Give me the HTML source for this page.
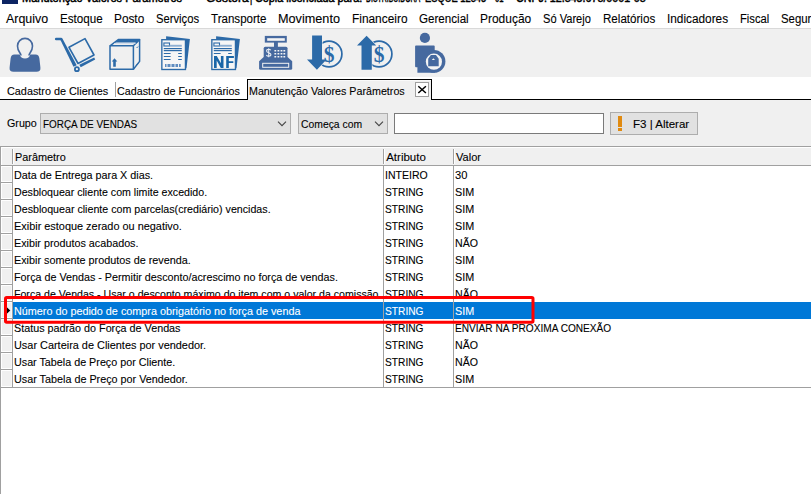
<!DOCTYPE html><html><head><meta charset="utf-8"><style>*{margin:0;padding:0;box-sizing:border-box}
html,body{width:811px;height:494px;overflow:hidden;background:#fff;font-family:"Liberation Sans",sans-serif;position:relative}
.a{position:absolute}
.t{position:absolute;white-space:nowrap;transform-origin:0 50%;font-family:"Liberation Sans",sans-serif;-webkit-text-stroke:0.1px currentColor}
#texts{position:absolute;left:0;top:0;width:811px;height:494px}
</style></head><body><!-- title icon -->
<div class="a" style="left:2px;top:0;width:16px;height:4px;background:#0d2463"></div>
<!-- menu line -->
<div class="a" style="left:0;top:28px;width:811px;height:1px;background:#d9d9d9"></div>
<!-- toolbar -->
<div class="a" style="left:0;top:29px;width:811px;height:48px;background:#f0f0f0"></div>
<!-- tab strip -->
<div class="a" style="left:0;top:99px;width:248px;height:1px;background:#000"></div>
<div class="a" style="left:431px;top:99px;width:380px;height:1px;background:#000"></div>
<div class="a" style="left:115px;top:82px;width:1px;height:15px;background:#a0a0a0"></div>
<div class="a" style="left:247px;top:79px;width:185px;height:21px;border:1px solid #000;border-bottom:none;background:#f0f0f0"></div>
<div class="a" style="left:248px;top:80px;width:183px;height:1px;background:#fafafa"></div>
<div class="a" style="left:415px;top:82px;width:14px;height:15px;border:1px solid #a0a0a0;background:#fff"></div>
<!-- filter area -->
<div class="a" style="left:0;top:100px;width:811px;height:46px;background:#f0f0f0"></div>
<div class="a" style="left:40px;top:113px;width:251px;height:21px;border:1px solid #adadad;background:#e1e1e1"></div>
<div class="a" style="left:298px;top:113px;width:90px;height:21px;border:1px solid #adadad;background:#e1e1e1"></div>
<div class="a" style="left:394px;top:113px;width:210px;height:21px;border:1px solid #7a7a7a;background:#fff"></div>
<div class="a" style="left:610px;top:112px;width:88px;height:23px;border:1px solid #adadad;background:#e1e1e1"></div>
<div class="a" style="left:618px;top:115.5px;width:4px;height:11px;background:#e08a10"></div>
<div class="a" style="left:618px;top:128px;width:4px;height:3px;background:#e08a10"></div>
<!-- grid -->
<div class="a" style="left:0;top:146px;width:811px;height:348px;border-top:1px solid #a0a0a0;border-left:1px solid #a0a0a0;background:#fff"></div>
<div class="a" style="left:1px;top:147px;width:810px;height:18px;background:#f0f0f0;border-top:1px solid #fff;border-left:1px solid #fff"></div>
<div class="a" style="left:0;top:165px;width:811px;height:1px;background:#a0a0a0"></div>
<div class="a" style="left:12px;top:149px;width:1px;height:15px;background:#a0a0a0"></div>
<div class="a" style="left:13px;top:149px;width:1px;height:15px;background:#fff"></div>
<div class="a" style="left:383px;top:149px;width:1px;height:15px;background:#a0a0a0"></div>
<div class="a" style="left:384px;top:149px;width:1px;height:15px;background:#fff"></div>
<div class="a" style="left:453px;top:149px;width:1px;height:15px;background:#a0a0a0"></div>
<div class="a" style="left:454px;top:149px;width:1px;height:15px;background:#fff"></div>
<!-- selected row -->
<div class="a" style="left:13px;top:302px;width:798px;height:17px;background:#0078d7"></div>
<!-- indicator cells -->
<div class="a" style="left:1px;top:166px;width:11px;height:16px;background:#f0f0f0;border:1px solid #fff;border-right-color:#f8f8f8"></div>
<div class="a" style="left:0;top:182px;width:13px;height:1px;background:#a0a0a0"></div>
<div class="a" style="left:1px;top:183px;width:11px;height:16px;background:#f0f0f0;border:1px solid #fff;border-right-color:#f8f8f8"></div>
<div class="a" style="left:0;top:199px;width:13px;height:1px;background:#a0a0a0"></div>
<div class="a" style="left:1px;top:200px;width:11px;height:16px;background:#f0f0f0;border:1px solid #fff;border-right-color:#f8f8f8"></div>
<div class="a" style="left:0;top:216px;width:13px;height:1px;background:#a0a0a0"></div>
<div class="a" style="left:1px;top:217px;width:11px;height:16px;background:#f0f0f0;border:1px solid #fff;border-right-color:#f8f8f8"></div>
<div class="a" style="left:0;top:233px;width:13px;height:1px;background:#a0a0a0"></div>
<div class="a" style="left:1px;top:234px;width:11px;height:16px;background:#f0f0f0;border:1px solid #fff;border-right-color:#f8f8f8"></div>
<div class="a" style="left:0;top:250px;width:13px;height:1px;background:#a0a0a0"></div>
<div class="a" style="left:1px;top:251px;width:11px;height:16px;background:#f0f0f0;border:1px solid #fff;border-right-color:#f8f8f8"></div>
<div class="a" style="left:0;top:267px;width:13px;height:1px;background:#a0a0a0"></div>
<div class="a" style="left:1px;top:268px;width:11px;height:16px;background:#f0f0f0;border:1px solid #fff;border-right-color:#f8f8f8"></div>
<div class="a" style="left:0;top:284px;width:13px;height:1px;background:#a0a0a0"></div>
<div class="a" style="left:1px;top:285px;width:11px;height:16px;background:#f0f0f0;border:1px solid #fff;border-right-color:#f8f8f8"></div>
<div class="a" style="left:0;top:301px;width:13px;height:1px;background:#a0a0a0"></div>
<div class="a" style="left:1px;top:302px;width:11px;height:16px;background:#f0f0f0;border:1px solid #fff;border-right-color:#f8f8f8"></div>
<div class="a" style="left:0;top:318px;width:13px;height:1px;background:#a0a0a0"></div>
<div class="a" style="left:1px;top:319px;width:11px;height:16px;background:#f0f0f0;border:1px solid #fff;border-right-color:#f8f8f8"></div>
<div class="a" style="left:0;top:335px;width:13px;height:1px;background:#a0a0a0"></div>
<div class="a" style="left:1px;top:336px;width:11px;height:16px;background:#f0f0f0;border:1px solid #fff;border-right-color:#f8f8f8"></div>
<div class="a" style="left:0;top:352px;width:13px;height:1px;background:#a0a0a0"></div>
<div class="a" style="left:1px;top:353px;width:11px;height:16px;background:#f0f0f0;border:1px solid #fff;border-right-color:#f8f8f8"></div>
<div class="a" style="left:0;top:369px;width:13px;height:1px;background:#a0a0a0"></div>
<div class="a" style="left:1px;top:370px;width:11px;height:17px;background:#f0f0f0;border:1px solid #fff;border-right-color:#f8f8f8"></div>
<div class="a" style="left:0;top:387px;width:13px;height:1px;background:#a0a0a0"></div>
<div class="a" style="left:12px;top:166px;width:1px;height:221px;background:#a0a0a0"></div>
<div class="a" style="left:0;top:387px;width:811px;height:1px;background:#a0a0a0"></div>
<div class="a" style="left:383px;top:166px;width:1px;height:221px;background:#a0a0a0"></div>
<div class="a" style="left:453px;top:166px;width:1px;height:221px;background:#a0a0a0"></div>
<div id="texts"><div class="t" id="t0" style="left:22.40px;top:-9.36px;font-size:12px;line-height:14px;color:#000;transform:scaleX(0.9167);-webkit-text-stroke:0.5px #000;">Manutenção Valores Parâmetros</div>
<div class="t" id="t1" style="left:193.40px;top:-9.36px;font-size:12px;line-height:14px;color:#000;transform:scaleX(1.0500);-webkit-text-stroke:0.5px #000;">-</div>
<div class="t" id="t2" style="left:205.90px;top:-9.36px;font-size:12px;line-height:14px;color:#000;-webkit-text-stroke:0.5px #000;">Gestora</div>
<div class="t" id="t3" style="left:250.40px;top:-9.36px;font-size:12px;line-height:14px;color:#000;transform:scaleX(0.7040);-webkit-text-stroke:0.5px #000;">|</div>
<div class="t" id="t4" style="left:255.40px;top:-9.36px;font-size:12px;line-height:14px;color:#000;transform:scaleX(0.9027);-webkit-text-stroke:0.5px #000;">Cópia licenciada para:</div>
<div class="t" id="t5" style="left:366.40px;top:-9.36px;font-size:12px;line-height:14px;color:#000;transform:scaleX(0.5765);-webkit-text-stroke:0.5px #000;">DISTRIBUIDORA</div>
<div class="t" id="t6" style="left:425.40px;top:-9.36px;font-size:12px;line-height:14px;color:#000;transform:scaleX(0.7775);-webkit-text-stroke:0.5px #000;">ESQUE 12345</div>
<div class="t" id="t7" style="left:495.00px;top:-9.36px;font-size:12px;line-height:14px;color:#000;transform:scaleX(0.6437);-webkit-text-stroke:0.5px #000;">01</div>
<div class="t" id="t8" style="left:516.00px;top:-9.36px;font-size:12px;line-height:14px;color:#000;transform:scaleX(0.8911);-webkit-text-stroke:0.5px #000;">CNPJ: 12.345.678/0001-08</div>
<div class="t" id="t9" style="left:5.90px;top:12.17px;font-size:12.5px;line-height:15px;color:#000;transform:scaleX(0.9931);">Arquivo</div>
<div class="t" id="t10" style="left:59.70px;top:12.17px;font-size:12.5px;line-height:15px;color:#000;transform:scaleX(0.9308);">Estoque</div>
<div class="t" id="t11" style="left:113.60px;top:12.17px;font-size:12.5px;line-height:15px;color:#000;transform:scaleX(0.9447);">Posto</div>
<div class="t" id="t12" style="left:155.80px;top:12.17px;font-size:12.5px;line-height:15px;color:#000;transform:scaleX(0.8991);">Serviços</div>
<div class="t" id="t13" style="left:211.10px;top:12.17px;font-size:12.5px;line-height:15px;color:#000;transform:scaleX(0.9252);">Transporte</div>
<div class="t" id="t14" style="left:277.90px;top:12.17px;font-size:12.5px;line-height:15px;color:#000;transform:scaleX(1.0141);">Movimento</div>
<div class="t" id="t15" style="left:351.70px;top:12.17px;font-size:12.5px;line-height:15px;color:#000;transform:scaleX(0.9507);">Financeiro</div>
<div class="t" id="t16" style="left:418.60px;top:12.17px;font-size:12.5px;line-height:15px;color:#000;transform:scaleX(0.9290);">Gerencial</div>
<div class="t" id="t17" style="left:480.00px;top:12.17px;font-size:12.5px;line-height:15px;color:#000;transform:scaleX(0.9567);">Produção</div>
<div class="t" id="t18" style="left:543.40px;top:12.17px;font-size:12.5px;line-height:15px;color:#000;transform:scaleX(0.8876);">Só Varejo</div>
<div class="t" id="t19" style="left:603.00px;top:12.17px;font-size:12.5px;line-height:15px;color:#000;transform:scaleX(0.9275);">Relatórios</div>
<div class="t" id="t20" style="left:667.00px;top:12.17px;font-size:12.5px;line-height:15px;color:#000;transform:scaleX(0.9455);">Indicadores</div>
<div class="t" id="t21" style="left:739.90px;top:12.17px;font-size:12.5px;line-height:15px;color:#000;transform:scaleX(0.8972);">Fiscal</div>
<div class="t" id="t22" style="left:780.70px;top:12.17px;font-size:12.5px;line-height:15px;color:#000;transform:scaleX(0.9113);">Segur</div>
<div class="t" id="t23" style="left:7.10px;top:83.71px;font-size:11.5px;line-height:14px;color:#000;transform:scaleX(0.9422);">Cadastro de Clientes</div>
<div class="t" id="t24" style="left:117.20px;top:83.71px;font-size:11.5px;line-height:14px;color:#000;transform:scaleX(0.9325);">Cadastro de Funcionários</div>
<div class="t" id="t25" style="left:249.40px;top:83.71px;font-size:11.5px;line-height:14px;color:#000;transform:scaleX(0.9309);">Manutenção Valores Parâmetros</div>
<div class="t" id="t26" style="left:7.10px;top:115.71px;font-size:11.5px;line-height:14px;color:#000;transform:scaleX(0.9322);">Grupo</div>
<div class="t" id="t27" style="left:42.90px;top:116.81px;font-size:11.5px;line-height:14px;color:#000;transform:scaleX(0.8620);">FORÇA DE VENDAS</div>
<div class="t" id="t28" style="left:300.90px;top:116.61px;font-size:11.5px;line-height:14px;color:#000;transform:scaleX(0.9018);">Começa com</div>
<div class="t" id="t29" style="left:632.70px;top:116.71px;font-size:11.5px;line-height:14px;color:#000;transform:scaleX(1.0027);">F3 | Alterar</div>
<div class="t" id="t30" style="left:14.80px;top:149.81px;font-size:11.5px;line-height:14px;color:#000;transform:scaleX(0.9462);">Parâmetro</div>
<div class="t" id="t31" style="left:386.20px;top:149.81px;font-size:11.5px;line-height:14px;color:#000;">Atributo</div>
<div class="t" id="t32" style="left:456.00px;top:149.81px;font-size:11.5px;line-height:14px;color:#000;transform:scaleX(0.9615);">Valor</div>
<div class="t" id="t33" style="left:14.30px;top:167.61px;font-size:11.5px;line-height:14px;color:#000;transform:scaleX(0.9378);">Data de Entrega para X dias.</div>
<div class="t" id="t34" style="left:384.90px;top:167.61px;font-size:11.5px;line-height:14px;color:#000;transform:scaleX(0.9155);">INTEIRO</div>
<div class="t" id="t35" style="left:455.10px;top:167.61px;font-size:11.5px;line-height:14px;color:#000;transform:scaleX(0.9690);">30</div>
<div class="t" id="t36" style="left:14.30px;top:184.61px;font-size:11.5px;line-height:14px;color:#000;transform:scaleX(0.9238);">Desbloquear cliente com limite excedido.</div>
<div class="t" id="t37" style="left:384.90px;top:184.61px;font-size:11.5px;line-height:14px;color:#000;transform:scaleX(0.8860);">STRING</div>
<div class="t" id="t38" style="left:455.10px;top:184.61px;font-size:11.5px;line-height:14px;color:#000;transform:scaleX(0.9387);">SIM</div>
<div class="t" id="t39" style="left:14.30px;top:201.61px;font-size:11.5px;line-height:14px;color:#000;transform:scaleX(0.9271);">Desbloquear cliente com parcelas(crediário) vencidas.</div>
<div class="t" id="t40" style="left:384.90px;top:201.61px;font-size:11.5px;line-height:14px;color:#000;transform:scaleX(0.8860);">STRING</div>
<div class="t" id="t41" style="left:455.10px;top:201.61px;font-size:11.5px;line-height:14px;color:#000;transform:scaleX(0.9387);">SIM</div>
<div class="t" id="t42" style="left:14.30px;top:218.61px;font-size:11.5px;line-height:14px;color:#000;transform:scaleX(0.9481);">Exibir estoque zerado ou negativo.</div>
<div class="t" id="t43" style="left:384.90px;top:218.61px;font-size:11.5px;line-height:14px;color:#000;transform:scaleX(0.8860);">STRING</div>
<div class="t" id="t44" style="left:455.10px;top:218.61px;font-size:11.5px;line-height:14px;color:#000;transform:scaleX(0.9387);">SIM</div>
<div class="t" id="t45" style="left:14.30px;top:235.61px;font-size:11.5px;line-height:14px;color:#000;transform:scaleX(0.9363);">Exibir produtos acabados.</div>
<div class="t" id="t46" style="left:384.90px;top:235.61px;font-size:11.5px;line-height:14px;color:#000;transform:scaleX(0.8860);">STRING</div>
<div class="t" id="t47" style="left:455.10px;top:235.61px;font-size:11.5px;line-height:14px;color:#000;transform:scaleX(0.9229);">NÃO</div>
<div class="t" id="t48" style="left:14.30px;top:252.61px;font-size:11.5px;line-height:14px;color:#000;transform:scaleX(0.9407);">Exibir somente produtos de revenda.</div>
<div class="t" id="t49" style="left:384.90px;top:252.61px;font-size:11.5px;line-height:14px;color:#000;transform:scaleX(0.8860);">STRING</div>
<div class="t" id="t50" style="left:455.10px;top:252.61px;font-size:11.5px;line-height:14px;color:#000;transform:scaleX(0.9387);">SIM</div>
<div class="t" id="t51" style="left:14.30px;top:269.61px;font-size:11.5px;line-height:14px;color:#000;transform:scaleX(0.9349);">Força de Vendas - Permitir desconto/acrescimo no força de vendas.</div>
<div class="t" id="t52" style="left:384.90px;top:269.61px;font-size:11.5px;line-height:14px;color:#000;transform:scaleX(0.8860);">STRING</div>
<div class="t" id="t53" style="left:455.10px;top:269.61px;font-size:11.5px;line-height:14px;color:#000;transform:scaleX(0.9387);">SIM</div>
<div class="t" id="t54" style="left:14.30px;top:286.61px;font-size:11.5px;line-height:14px;color:#000;transform:scaleX(0.9213);">Força de Vendas - Usar o desconto máximo do item com o valor da comissão</div>
<div class="t" id="t55" style="left:384.90px;top:286.61px;font-size:11.5px;line-height:14px;color:#000;transform:scaleX(0.8860);">STRING</div>
<div class="t" id="t56" style="left:455.10px;top:286.61px;font-size:11.5px;line-height:14px;color:#000;transform:scaleX(0.9229);">NÃO</div>
<div class="t" id="t57" style="left:14.30px;top:303.61px;font-size:11.5px;line-height:14px;color:#fff;transform:scaleX(0.9392);">Número do pedido de compra obrigatório no força de venda</div>
<div class="t" id="t58" style="left:384.90px;top:303.61px;font-size:11.5px;line-height:14px;color:#fff;transform:scaleX(0.8860);">STRING</div>
<div class="t" id="t59" style="left:455.10px;top:303.61px;font-size:11.5px;line-height:14px;color:#fff;transform:scaleX(0.9387);">SIM</div>
<div class="t" id="t60" style="left:14.30px;top:320.61px;font-size:11.5px;line-height:14px;color:#000;transform:scaleX(0.9368);">Status padrão do Força de Vendas</div>
<div class="t" id="t61" style="left:384.90px;top:320.61px;font-size:11.5px;line-height:14px;color:#000;transform:scaleX(0.8860);">STRING</div>
<div class="t" id="t62" style="left:455.10px;top:320.61px;font-size:11.5px;line-height:14px;color:#000;transform:scaleX(0.8792);">ENVIAR NA PROXIMA CONEXÃO</div>
<div class="t" id="t63" style="left:14.30px;top:337.61px;font-size:11.5px;line-height:14px;color:#000;transform:scaleX(0.9480);">Usar Carteira de Clientes por vendedor.</div>
<div class="t" id="t64" style="left:384.90px;top:337.61px;font-size:11.5px;line-height:14px;color:#000;transform:scaleX(0.8860);">STRING</div>
<div class="t" id="t65" style="left:455.10px;top:337.61px;font-size:11.5px;line-height:14px;color:#000;transform:scaleX(0.9229);">NÃO</div>
<div class="t" id="t66" style="left:14.30px;top:354.61px;font-size:11.5px;line-height:14px;color:#000;transform:scaleX(0.9351);">Usar Tabela de Preço por Cliente.</div>
<div class="t" id="t67" style="left:384.90px;top:354.61px;font-size:11.5px;line-height:14px;color:#000;transform:scaleX(0.8860);">STRING</div>
<div class="t" id="t68" style="left:455.10px;top:354.61px;font-size:11.5px;line-height:14px;color:#000;transform:scaleX(0.9229);">NÃO</div>
<div class="t" id="t69" style="left:14.30px;top:371.61px;font-size:11.5px;line-height:14px;color:#000;transform:scaleX(0.9384);">Usar Tabela de Preço por Vendedor.</div>
<div class="t" id="t70" style="left:384.90px;top:371.61px;font-size:11.5px;line-height:14px;color:#000;transform:scaleX(0.8860);">STRING</div>
<div class="t" id="t71" style="left:455.10px;top:371.61px;font-size:11.5px;line-height:14px;color:#000;transform:scaleX(0.9387);">SIM</div></div><svg class="a" style="left:0;top:0" width="811" height="494" viewBox="0 0 811 494">
<!-- person -->
<g fill="#46699f">
<path d="M14.5,54.5 L19.8,54.5 C20.3,57.3 22.2,58.6 25,58.6 C27.8,58.6 29.7,57.3 30.2,54.5 L35.5,54.5 C38,54.5 39,56 39.4,58.5 L40.4,67.5 C40.8,70.5 39.3,71.8 36.5,71.8 L13.5,71.8 C10.7,71.8 9.2,70.5 9.6,67.5 L10.6,58.5 C11,56 12,54.5 14.5,54.5 Z"/>
</g>
<path d="M21,55.5 C21,53.2 17.5,51.5 17.5,45.9 A7.5,7.5 0 0 1 32.5,45.9 C32.5,51.5 29,53.2 29,55.5" fill="none" stroke="#46699f" stroke-width="1.6"/>
<!-- hand truck -->
<g stroke="#2c6aa8" fill="none" stroke-linecap="round">
<line x1="56.2" y1="39" x2="61" y2="39" stroke-width="2.6"/>
<polygon points="60.2,39.6 62.4,38.4 76.7,65.2 73.5,66.8" fill="#2c6aa8" stroke="none"/>
<circle cx="76.9" cy="69.2" r="2" stroke-width="1.8"/>
<polygon points="69,47.3 85,38.6 94,55 78,63.5" stroke-width="1.6" stroke-linejoin="round"/>
<polygon points="79.3,64.7 94.2,57.4 95.2,59.4 80.7,67.3" fill="#2c6aa8" stroke="none"/>
</g>
<!-- box -->
<g stroke="#2c6aa8" fill="none" stroke-width="1.5" stroke-linejoin="round">
<rect x="110" y="45.8" width="23.4" height="23.4"/>
<polyline points="110,45.8 118.3,39.6 139.6,39.6 133.4,45.8"/>
<polyline points="139.6,39.6 139.6,61.4 133.4,69.2"/>
</g>
<polygon points="118.3,39.6 139.6,39.6 136.8,42.5 115,42.5" fill="#2c6aa8"/>
<line x1="114" y1="43.6" x2="135.6" y2="43.6" stroke="#cfdbea" stroke-width="1"/>
<path d="M136.6,48 l1.5,-1.5 M136.6,65 l1.5,-1.5" stroke="#2c6aa8" stroke-width="1"/>
<polygon points="114.5,58.3 117.3,61.5 115.8,61.5 115.8,66.7 113.2,66.7 113.2,61.5 111.8,61.5" fill="#2c6aa8"/>
<!-- documents -->
<g>
<polygon points="166.1,36.3 189.9,39 186.5,68.2 184,68.2 184,39.8 166.1,39.8" fill="#2c6aa8"/>
<rect x="161.85" y="39.7" width="23.6" height="29.8" fill="#f6f6f6" stroke="#2c6aa8" stroke-width="1.35"/>
<rect x="163.9" y="43" width="5.6" height="3" fill="none" stroke="#2c6aa8" stroke-width="1.1"/>
<rect x="169.5" y="44.8" width="12.3" height="1.9" fill="#8fb0d3"/>
<rect x="163.8" y="48" width="18" height="1.2" fill="#2c6aa8"/>
<rect x="163.8" y="50" width="18" height="1.2" fill="#2c6aa8"/>
</g>
<g fill="#2c6aa8">
<rect x="163.8" y="53" width="6.8" height="1" /><rect x="178.2" y="53" width="3.6" height="1"/>
<rect x="163.8" y="56" width="6.8" height="1" /><rect x="178.2" y="56" width="3.6" height="1"/>
<rect x="163.8" y="59" width="6.8" height="1" /><rect x="178.2" y="59" width="3.6" height="1"/>
<rect x="165" y="64" width="15.7" height="3" fill="#5f8cc0"/>
<rect x="166.5" y="64" width="1" height="3" fill="#f4f4f4"/><rect x="170.5" y="64" width="1" height="3" fill="#f4f4f4"/><rect x="174.5" y="64" width="1" height="3" fill="#f4f4f4"/><rect x="178" y="64" width="1" height="3" fill="#f4f4f4"/>
</g>
<g transform="translate(50,0)">
<polygon points="166.1,36.3 189.9,39 186.5,68.2 184,68.2 184,39.8 166.1,39.8" fill="#2c6aa8"/>
<rect x="161.85" y="39.7" width="23.6" height="29.8" fill="#f6f6f6" stroke="#2c6aa8" stroke-width="1.35"/>
<rect x="163.9" y="43" width="5.6" height="3" fill="none" stroke="#2c6aa8" stroke-width="1.1"/>
<rect x="169.5" y="44.8" width="12.3" height="1.9" fill="#8fb0d3"/>
<rect x="163.8" y="48" width="18" height="1.2" fill="#2c6aa8"/>
<rect x="163.8" y="50" width="18" height="1.2" fill="#2c6aa8"/>
</g>
<g fill="#2c6aa8">
<rect x="213.8" y="53" width="6.8" height="1" /><rect x="228.2" y="53" width="3.6" height="1"/>
</g>
<path d="M214,56 L216.8,56 L220.9,63.2 L220.9,56 L223.5,56 L223.5,67.9 L220.8,67.9 L216.7,60.6 L216.7,67.9 L214,67.9 Z M226.2,56 L233.9,56 L233.9,57.9 L228.8,57.9 L228.8,61.3 L233.3,61.3 L233.3,63 L228.8,63 L228.8,67.9 L226.2,67.9 Z" fill="#1a66a8"/>
<!-- cash register -->
<g fill="#46699f">
<rect x="264.8" y="35.9" width="22" height="6.7"/>
<rect x="274" y="42" width="3.9" height="5.5"/>
<rect x="263.7" y="46.7" width="23.8" height="11" rx="1.5"/>
<path d="M263.7,57 L287.5,57 L292.2,61.2 L292.2,68.3 Q292.2,69.8 290.7,69.8 L260.6,69.8 Q259.1,69.8 259.1,68.3 L259.1,61.2 Z"/>
</g>
<rect x="267.2" y="38.2" width="17.6" height="2.6" fill="#f4f4f4"/>
<rect x="262.7" y="63.3" width="26" height="4" fill="none" stroke="#f4f4f4" stroke-width="1"/>
<path d="M270.8,50.3 C270.3,49.5 269.6,49.2 268.7,49.2 C267.4,49.2 266.6,50 266.6,50.9 C266.6,53 270.9,52.3 270.9,54.5 C270.9,55.5 270,56.2 268.7,56.2 C267.6,56.2 266.8,55.8 266.4,55 M268.7,48.3 L268.7,57.2" fill="none" stroke="#e8ecf2" stroke-width="1.1"/>
<g fill="#f4f4f4">
<rect x="274.4" y="50" width="1.8" height="1.5"/><rect x="277.5" y="50" width="1.8" height="1.5"/><rect x="280.6" y="50" width="1.8" height="1.5"/><rect x="283.4" y="50" width="1.8" height="1.5"/>
<rect x="274.4" y="53" width="1.8" height="1.5"/><rect x="277.5" y="53" width="1.8" height="1.5"/><rect x="280.6" y="53" width="1.8" height="1.5"/><rect x="283.4" y="53" width="1.8" height="1.5"/>
<rect x="274.4" y="56" width="1.8" height="1.5"/><rect x="277.5" y="56" width="1.8" height="1.5"/><rect x="280.6" y="56" width="1.8" height="1.5"/><rect x="283.4" y="56" width="1.8" height="1.5"/>
</g>
<!-- money down -->
<circle cx="329" cy="54" r="12.9" fill="none" stroke="#2c6aa8" stroke-width="1.7"/>
<polygon points="312.1,35.4 322,35.4 322,59.6 326.5,59.6 316.9,69.8 307,59.6 312.1,59.6" fill="#2c6aa8" stroke="#f0f0f0" stroke-width="1.2" paint-order="stroke"/>
<text x="0" y="0" transform="translate(329.1,62.1) scale(0.92,1)" font-family="Liberation Serif" font-weight="bold" font-size="23.4" fill="#2c6aa8" text-anchor="middle">$</text>
<!-- money up -->
<circle cx="379" cy="54" r="12.9" fill="none" stroke="#2c6aa8" stroke-width="1.7"/>
<polygon points="366.6,35.8 376.2,45.5 371.8,45.5 371.8,69.8 361.5,69.8 361.5,45.5 357,45.5" fill="#2c6aa8" stroke="#f0f0f0" stroke-width="1.2" paint-order="stroke"/>
<text x="0" y="0" transform="translate(379.1,62.1) scale(0.92,1)" font-family="Liberation Serif" font-weight="bold" font-size="23.4" fill="#2c6aa8" text-anchor="middle">$</text>
<!-- lock person -->
<g fill="#46699f">
<circle cx="424.9" cy="37.9" r="5.1"/>
<path d="M416,45.4 L433.8,45.4 Q434.7,45.4 434.7,46.3 L434.7,60 L435,72.8 L417.4,72.8 L417.4,67.2 L416,67.2 Q415.1,67.2 415.1,66.3 L415.1,46.3 Q415.1,45.4 416,45.4 Z"/>
<circle cx="434" cy="61.4" r="11.4"/>
</g>
<circle cx="433.9" cy="61.7" r="8.1" fill="#f4f4f4" stroke="none"/>
<circle cx="433.9" cy="61.7" r="5.9" fill="#46699f" fill-opacity="0" />
<path d="M428.2,66.2 L428.2,58.8 L430.9,55.1 L436,55.1 L438.7,58.8 L438.7,66.2 Z" fill="#46699f"/>
<polygon points="433.4,58.2 435,60 431.8,60" fill="#f4f4f4"/>
<!-- chevrons -->
<polyline points="278,121.6 282,125.6 286,121.6" fill="none" stroke="#444" stroke-width="1.1"/>
<polyline points="375,121.6 379,125.6 383,121.6" fill="none" stroke="#444" stroke-width="1.1"/>
<!-- close X -->
<path d="M418.3,86.2 L425.9,93 M425.9,86.2 L418.3,93" stroke="#000" stroke-width="1.5"/>
<!-- row indicator arrow -->
<polygon points="6,306.5 10.3,310.5 6,314.5" fill="#000"/>
<!-- red highlight -->
<rect x="5.5" y="297.5" width="527.5" height="24.8" rx="1.2" fill="none" stroke="#ff0000" stroke-width="3"/>
</svg>
</body></html>
